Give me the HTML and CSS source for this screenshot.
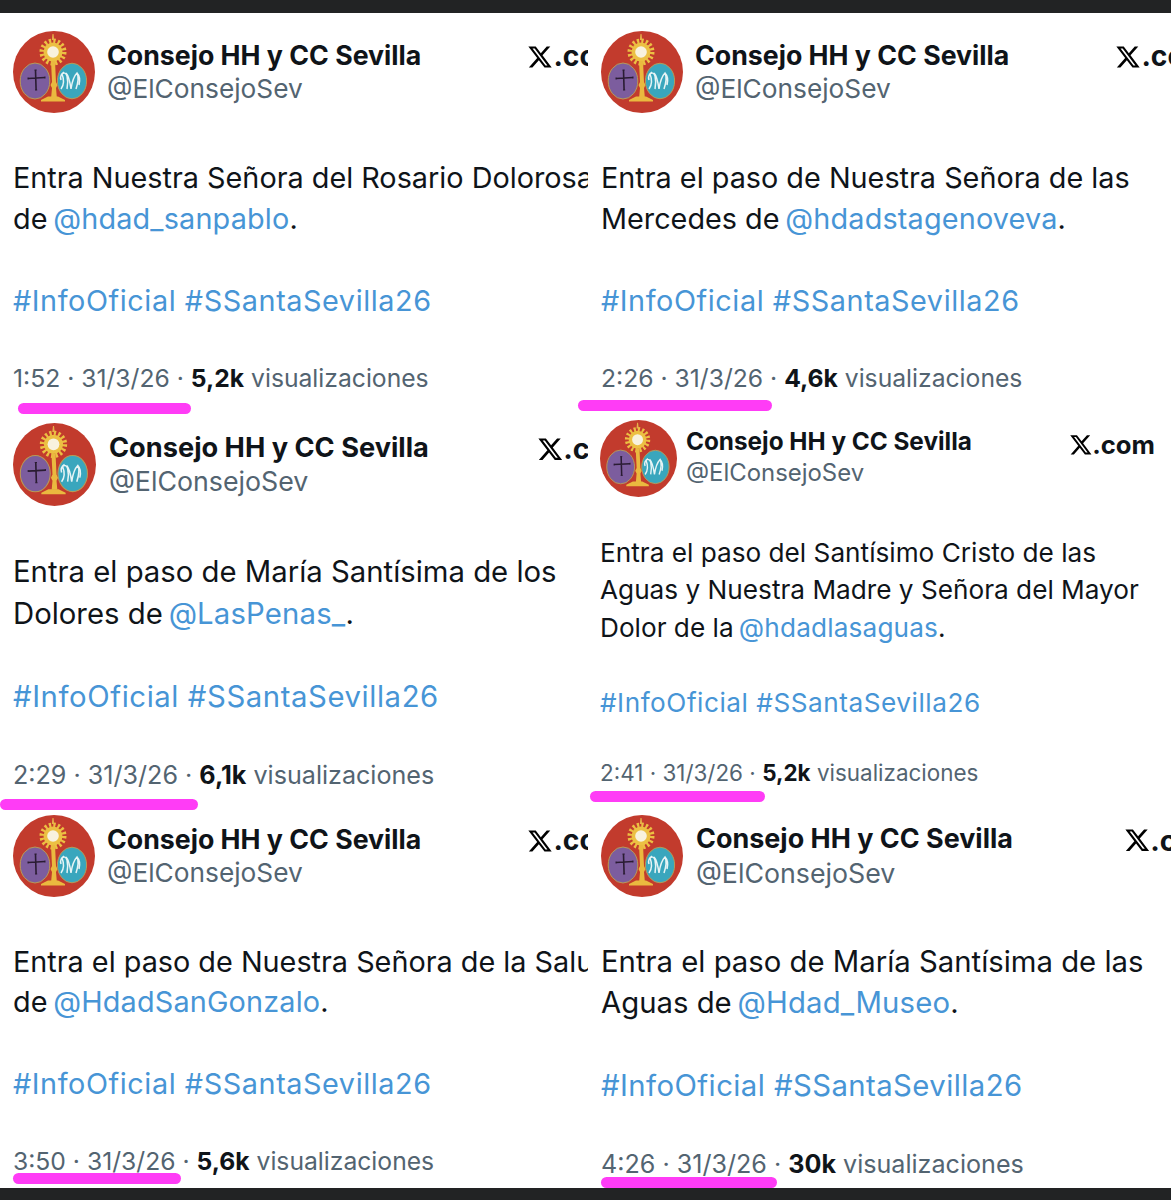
FILE: index.html
```html
<!DOCTYPE html>
<html lang="en">
<head>
    <meta charset="UTF-8">
    <meta name="viewport" content="width=device-width, initial-scale=1.0">
    <title>Consejo HH y CC Sevilla</title>
    <link rel="stylesheet" href="styles.css">
</head>
<body>
    <svg class="defs" width="0" height="0">
        <symbol id="crest" viewBox="0 0 82 82">
            <ellipse cx="41" cy="41" rx="41" ry="41" fill="#c23b2d"/>
            <circle cx="40" cy="21" r="11" fill="none" stroke="#ecc043" stroke-width="5" stroke-dasharray="2.200 2.120"/>
            <circle cx="40" cy="21" r="9.500" fill="#ecc043"/>
            <path d="M39.500 3h1l.7 6h-2.400z" fill="#e6b24a"/>
            <circle cx="40" cy="21" r="5.800" fill="#f8f2de"/>
            <path d="M38 30h4l1 21 1.500 3-1.500 3 .8 9h-5.600l.8-9-1.500-3 1.500-3z" fill="#eab93f"/>
            <path d="M35 65.500h10l7 3.500v1.500H28V69z" fill="#eab93f"/>
            <ellipse cx="22" cy="50" rx="14.800" ry="18" fill="#7c5d9e" stroke="#b99a55" stroke-width="1"/>
            <ellipse cx="59" cy="50" rx="14.600" ry="17.800" fill="#39a6bd" stroke="#b99a55" stroke-width="1"/>
            <path d="M22.500 39l.6 20M15 47.500l17-1" stroke="#2a1c33" stroke-width="1.600" fill="none"/>
            <path d="M21.500 39h2.200M22 59h2.200M15 46.500v2M32 45.500v2" stroke="#2a1c33" stroke-width="1" fill="none"/>
            <path d="M48 58c3-4 3-10 1-15 2-2 4-1 5 2 1 4 1 8 0 13M53 42c3 3 4 9 5 16 1-7 3-13 6-16 2 4 1 10-1 16M51 41c-3 2-4 5-3 8M64 42c3 3 3 8 2 12" stroke="#e6f4f5" stroke-width="1.500" fill="none"/>
        </symbol>
        <symbol id="xmark" viewBox="0 0 24 24">
            <path d="M18.244 2.250h3.308l-7.227 8.260 8.502 11.240H16.170l-5.214-6.817L4.990 21.750H1.680l7.730-8.835L1.254 2.250H8.080l4.713 6.231zm-1.161 17.520h1.833L7.084 4.126H5.117z"/>
        </symbol>
    </svg>
    <main class="page">
        <section class="column column-left">
            <article class="tile tile-a">
                <header class="head">
                    <svg class="avatar"><use href="#crest"/></svg>
                    <div class="who"><div class="name">Consejo HH y CC Sevilla</div><div class="handle">@ElConsejoSev</div></div>
                    <div class="site"><svg class="xmark"><use href="#xmark"/></svg>.com</div>
                </header>
                <p class="body">Entra Nuestra Señora del Rosario Dolorosa<br>de <a>@hdad_sanpablo</a>.<br><br><a class="tag">#InfoOficial #SSantaSevilla26</a></p>
                <p class="meta">1:52 · 31/3/26 · <b>5,2k</b> visualizaciones</p>
                <div class="mark"></div>
            </article>
            <article class="tile tile-b">
                <header class="head">
                    <svg class="avatar"><use href="#crest"/></svg>
                    <div class="who"><div class="name">Consejo HH y CC Sevilla</div><div class="handle">@ElConsejoSev</div></div>
                    <div class="site"><svg class="xmark"><use href="#xmark"/></svg>.com</div>
                </header>
                <p class="body">Entra el paso de María Santísima de los<br>Dolores de <a>@LasPenas_</a>.<br><br><a class="tag">#InfoOficial #SSantaSevilla26</a></p>
                <p class="meta">2:29 · 31/3/26 · <b>6,1k</b> visualizaciones</p>
                <div class="mark"></div>
            </article>
            <article class="tile tile-c">
                <header class="head">
                    <svg class="avatar"><use href="#crest"/></svg>
                    <div class="who"><div class="name">Consejo HH y CC Sevilla</div><div class="handle">@ElConsejoSev</div></div>
                    <div class="site"><svg class="xmark"><use href="#xmark"/></svg>.com</div>
                </header>
                <p class="body">Entra el paso de Nuestra Señora de la Salud<br>de <a>@HdadSanGonzalo</a>.<br><br><a class="tag">#InfoOficial #SSantaSevilla26</a></p>
                <p class="meta">3:50 · 31/3/26 · <b>5,6k</b> visualizaciones</p>
                <div class="mark"></div>
            </article>
        </section>
        <section class="column column-right">
            <article class="tile tile-d">
                <header class="head">
                    <svg class="avatar"><use href="#crest"/></svg>
                    <div class="who"><div class="name">Consejo HH y CC Sevilla</div><div class="handle">@ElConsejoSev</div></div>
                    <div class="site"><svg class="xmark"><use href="#xmark"/></svg>.com</div>
                </header>
                <p class="body">Entra el paso de Nuestra Señora de las<br>Mercedes de <a>@hdadstagenoveva</a>.<br><br><a class="tag">#InfoOficial #SSantaSevilla26</a></p>
                <p class="meta">2:26 · 31/3/26 · <b>4,6k</b> visualizaciones</p>
                <div class="mark"></div>
            </article>
            <article class="tile tile-e">
                <header class="head">
                    <svg class="avatar"><use href="#crest"/></svg>
                    <div class="who"><div class="name">Consejo HH y CC Sevilla</div><div class="handle">@ElConsejoSev</div></div>
                    <div class="site"><svg class="xmark"><use href="#xmark"/></svg>.com</div>
                </header>
                <p class="body">Entra el paso del Santísimo Cristo de las<br>Aguas y Nuestra Madre y Señora del Mayor<br>Dolor de la <a>@hdadlasaguas</a>.<br><br><a class="tag">#InfoOficial #SSantaSevilla26</a></p>
                <p class="meta">2:41 · 31/3/26 · <b>5,2k</b> visualizaciones</p>
                <div class="mark"></div>
            </article>
            <article class="tile tile-f">
                <header class="head">
                    <svg class="avatar"><use href="#crest"/></svg>
                    <div class="who"><div class="name">Consejo HH y CC Sevilla</div><div class="handle">@ElConsejoSev</div></div>
                    <div class="site"><svg class="xmark"><use href="#xmark"/></svg>.com</div>
                </header>
                <p class="body">Entra el paso de María Santísima de las<br>Aguas de <a>@Hdad_Museo</a>.<br><br><a class="tag">#InfoOficial #SSantaSevilla26</a></p>
                <p class="meta">4:26 · 31/3/26 · <b>30k</b> visualizaciones</p>
                <div class="mark"></div>
            </article>
        </section>
    </main>
</body>
</html>
```

FILE: styles.css
```css
html, body {
    margin: 0;
    height: 1200px;
    overflow: hidden;
}
body {
    background-color: #222324;
    font-family: Inter, "Liberation Sans", sans-serif;
    color: #0f1419;
}
.defs {
    display: block;
}
.page {
    display: flex;
    height: 1175px;
    margin-top: 13px;
    background: white;
}
.column-left {
    width: 588px;
    flex: none;
}
.column-right {
    width: 583px;
    flex: none;
}
.tile {
    box-sizing: border-box;
    padding-left: 13px;
    white-space: nowrap;
}
.tile-a { height: 402px; padding-top: 18px; font-size: 28.800px; --avatar: 82px; --gap: 12px; --body-gap: 44px; --line: 41px; --mark-top: 10px; --mark-left: 5px; --mark-width: 173px; }
.tile-b { height: 393px; padding-top: 8px; font-size: 29.300px; --avatar: 83px; --gap: 13px; --body-gap: 45px; --line: 41.700px; --mark-top: 9px; --mark-left: -13px; --mark-width: 198px; }
.tile-c { height: 380px; padding-top: 7px; font-size: 28.800px; --avatar: 82px; --gap: 12px; --body-gap: 44.500px; --line: 40.700px; --mark-top: -3px; --mark-left: 0px; --mark-width: 168px; }
.tile-d { height: 399px; padding-top: 18px; font-size: 28.800px; --avatar: 82px; --gap: 12px; --body-gap: 44px; --line: 41px; --mark-top: 7px; --mark-left: -23px; --mark-width: 194px; }
.tile-e { height: 394px; padding-top: 8px; padding-left: 12px; font-size: 26.200px; --avatar: 77px; --gap: 9px; --body-gap: 37px; --line: 37.400px; --mark-top: 5px; --mark-left: -10px; --mark-width: 175px; }
.tile-f { height: 382px; padding-top: 9px; font-size: 29.300px; --avatar: 82px; --gap: 13px; --body-gap: 44px; --line: 41.400px; --mark-top: -2px; --mark-left: 0px; --mark-width: 176px; }
.head {
    display: flex;
    align-items: center;
    height: var(--avatar);
    overflow: hidden;
}
.avatar {
    width: var(--avatar);
    height: var(--avatar);
    flex: none;
    margin-right: var(--gap);
}
.who {
    width: 14.6em;
    flex: none;
    margin-top: 2px;
}
.tile-e .who {
    margin-top: -2px;
}
.name {
    font-size: 0.928em;
    font-weight: 700;
    line-height: 1.22;
}
.tile-f .name {
    font-size: 0.92em;
}
.handle {
    font-size: 0.913em;
    color: #536471;
    line-height: 1.32;
}
.site {
    display: flex;
    align-items: baseline;
    font-size: 0.98em;
    font-weight: 700;
    margin-top: -1.1em;
}
.xmark {
    width: 0.92em;
    height: 0.92em;
    align-self: center;
}
.body {
    margin: var(--body-gap) 0 0;
    line-height: var(--line);
    overflow: hidden;
}
.body a {
    color: #4795d6;
    letter-spacing: 0.006em;
    margin-left: -0.08em;
}
.body .tag {
    letter-spacing: 0.02em;
    margin-left: 0;
}
.tile-f .body .tag {
    letter-spacing: 0.015em;
}
.meta {
    margin: 1.7em 0 0;
    font-size: 0.857em;
    color: #536471;
}
.meta b {
    color: #0f1419;
}
.mark {
    width: var(--mark-width);
    height: 11px;
    margin: var(--mark-top) 0 0 var(--mark-left);
    background: #ff3cf6;
    border-radius: 6px;
    position: relative;
}
```
